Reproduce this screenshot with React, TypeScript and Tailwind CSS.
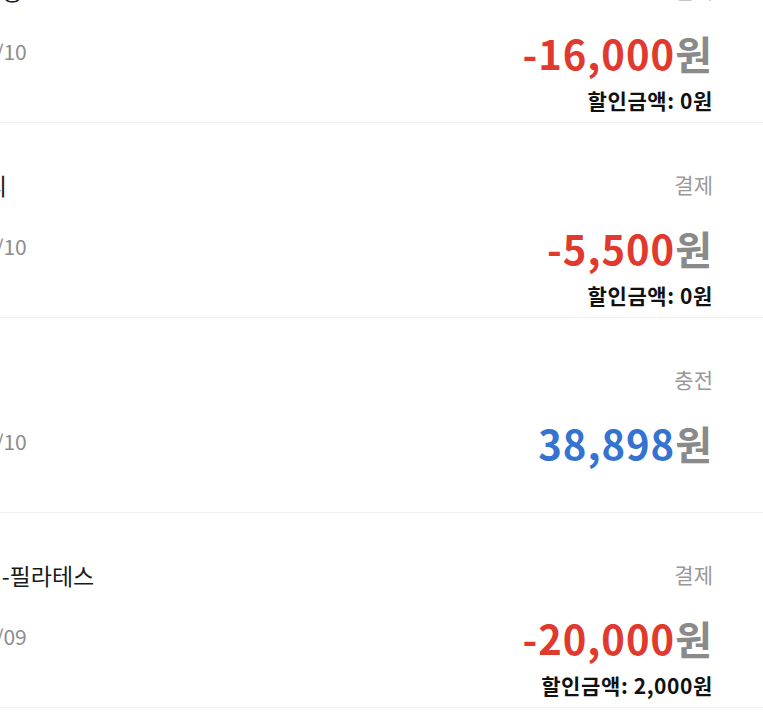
import React from 'react';

interface Tx {
  id: number;
  title: string;
  date: string;
  type: string;
  amount: number;
  discount?: number;
}

const txs: Tx[] = [
  { id: 1, title: '지하철이용', date: '2024/05/10', type: '결제', amount: -16000, discount: 0 },
  { id: 2, title: '메가 커피', date: '2024/05/10', type: '결제', amount: -5500, discount: 0 },
  { id: 3, title: '머니충전', date: '2024/05/10', type: '충전', amount: 38898 },
  { id: 4, title: '바디라인-필라테스', date: '2024/05/09', type: '결제', amount: -20000, discount: 2000 },
];

const fmt = (n: number) => n.toLocaleString('ko-KR');

const TxRow: React.FC<{ tx: Tx }> = ({ tx }) => {
  const isCharge = tx.amount > 0;
  return (
    <div className="flex h-[195px] justify-between border-b border-[#f0f0f0] pr-[50px]">
      <div className="-ml-[83px] flex flex-col pt-[48px]">
        <div className="h-[28px] text-[23px] leading-[28px] text-[#1a1a1a] whitespace-nowrap">{tx.title}</div>
        <div className="mt-[33px] h-[28px] text-[21px] leading-[28px] text-[#8c8c8c]">{tx.date}</div>
      </div>
      <div className="flex flex-col items-end pt-[47px]">
        <div className="h-[28px] text-[21px] leading-[28px] text-[#999999]">{tx.type}</div>
        <div className="mt-[28px] h-[44px] text-[40px] font-bold leading-[44px] tracking-[1px]">
          <span className={isCharge ? 'text-[#3473d0]' : 'text-[#e1392e]'}>
            {isCharge ? fmt(tx.amount) : '-' + fmt(-tx.amount)}
          </span>
          <span className="text-[#8a8a8a]">원</span>
        </div>
        {tx.discount !== undefined && (
          <div className="mt-[12px] h-[26px] text-[21px] font-bold leading-[26px] tracking-[0.6px] text-[#111111]">
            할인금액: {fmt(tx.discount)}원
          </div>
        )}
      </div>
    </div>
  );
};

export default function App() {
  return (
    <div
      className="h-[727px] w-[763px] overflow-hidden bg-white"
      style={{ fontFamily: '"Noto Sans CJK KR", "Noto Sans", sans-serif' }}
    >
      <div className="-mt-[72px]">
        {txs.map((tx) => (
          <TxRow key={tx.id} tx={tx} />
        ))}
      </div>
    </div>
  );
}
